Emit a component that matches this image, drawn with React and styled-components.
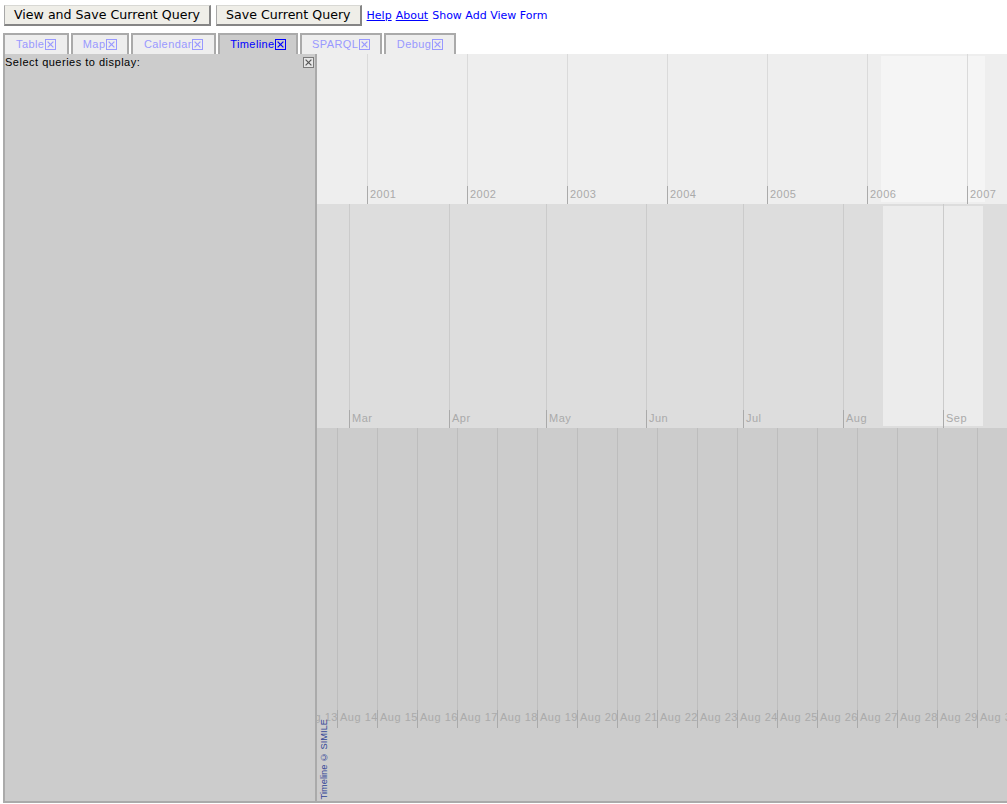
import React from 'react';
import styled, { createGlobalStyle } from 'styled-components';

const GlobalStyle = createGlobalStyle`
  html, body { margin: 0; padding: 0; background: #fff; }
  body {
    font-family: "Liberation Sans", Arial, sans-serif;
    width: 1007px;
    overflow: hidden;
  }
  #root { width: 1007px; }
`;

const Page = styled.div`
  padding: 4px 0 0 3px;
`;

const Toolbar = styled.div`
  display: flex;
  align-items: center;
  height: 22px;
  margin-left: 1px;
`;

const Button = styled.button`
  box-sizing: border-box;
  height: 21px;
  margin: 0 5px 0 0;
  padding: 0 9px 0 9px;
  font-family: "DejaVu Sans", sans-serif;
  font-size: 12.6px;
  color: #000;
  background: #efeee8;
  border-style: solid;
  border-width: 1px 2px 2px 1px;
  border-color: #d8d8d4 #858585 #858585 #a8a8a8;
  white-space: nowrap;
  cursor: pointer;
`;

const NavLink = styled.a`
  font-family: "DejaVu Sans", sans-serif;
  font-size: 11px;
  color: #0000ff;
  text-decoration: ${(p) => (p.$plain ? 'none' : 'underline')};
  margin-right: 4px;
  cursor: pointer;
  white-space: nowrap;
`;

const TabRow = styled.div`
  display: flex;
  align-items: flex-end;
  gap: 1px;
  margin-top: 7px;
  height: 21px;
`;

const Tab = styled.div`
  box-sizing: border-box;
  height: 21px;
  display: flex;
  align-items: center;
  padding: 0 ${(p) => p.$pad ?? 11}px;
  margin-right: ${(p) => p.$mr || 0}px;
  border: 2px solid #aaa;
  border-bottom: none;
  background: ${(p) => (p.$active ? '#ccc' : '#eee')};
  color: ${(p) => (p.$active ? '#0000ff' : '#9999ff')};
  font-family: "Liberation Sans", Arial, sans-serif;
  font-size: 11px;
  letter-spacing: 0.4px;
  line-height: 13px;
  white-space: nowrap;
  cursor: pointer;
`;

const IconSvg = styled.svg`
  flex: none;
  display: block;
  margin-left: ${(p) => (p.$panel ? 0 : 0.5)}px;
  margin-top: ${(p) => (p.$panel ? 1 : 0)}px;
  rect {
    fill: ${(p) => (p.$panel ? '#e6e6e6' : 'none')};
    stroke: ${(p) => (p.$panel ? '#7a7a7a' : 'currentColor')};
    stroke-width: 1;
  }
  path {
    stroke: ${(p) => (p.$panel ? '#555' : 'currentColor')};
    stroke-width: 1.2;
    fill: none;
  }
`;

const CloseIcon = ({ panel }) => (
  <IconSvg $panel={panel} width="11" height="11" viewBox="0 0 11 11">
    <rect x="0.5" y="0.5" width="10" height="10" />
    <path d="M2.6 2.6 L8.4 8.4 M8.4 2.6 L2.6 8.4" />
  </IconSvg>
);

const Main = styled.div`
  display: flex;
  height: 749px;
`;

const Sidebar = styled.div`
  box-sizing: border-box;
  width: 314px;
  flex: none;
  background: #ccc;
  border: 2px solid #aaa;
  border-top: none;
`;

const SidebarHeader = styled.div`
  display: flex;
  justify-content: space-between;
  align-items: flex-start;
  padding: 2px 1px 0 0;
  font-family: "Liberation Sans", Arial, sans-serif;
  font-size: 11px;
  letter-spacing: 0.5px;
  line-height: 13px;
  color: #000;
`;

const Timeline = styled.div`
  position: relative;
  flex: 1;
  min-width: 0;
  background: #ccc;
  border-bottom: 2px solid #aaa;
  overflow: hidden;
`;

const Band = styled.div`
  position: relative;
  height: ${(p) => p.$h}px;
  background: ${(p) => p.$bg};
  overflow: hidden;
`;

const Highlight = styled.div`
  position: absolute;
  top: 2px;
  bottom: 2px;
  background: ${(p) => p.$color};
`;

const Marker = styled.div`
  position: absolute;
  top: 0;
  bottom: 0;
  width: 0;
`;

const GridLine = styled.div`
  position: absolute;
  left: 0;
  top: 0;
  bottom: 18px;
  width: 1px;
  background: ${(p) => p.$color};
`;

const Tick = styled.div`
  position: absolute;
  left: 0;
  bottom: 0;
  height: 18px;
  width: 1px;
  background: #aaa;
  z-index: 1;
`;

const Label = styled.div`
  position: absolute;
  left: 3px;
  bottom: ${(p) => p.$bottom ?? 3}px;
  font-family: "Liberation Sans", Arial, sans-serif;
  font-size: 11px;
  letter-spacing: 0.5px;
  line-height: 13px;
  color: #aaa;
  white-space: nowrap;
`;

const Copyright = styled.div`
  position: absolute;
  left: 2px;
  bottom: 2px;
  writing-mode: vertical-rl;
  transform: rotate(180deg);
  font-family: "Liberation Sans", Arial, sans-serif;
  font-size: 9.3px;
  line-height: 11px;
  color: #2f4396;
  white-space: nowrap;
`;

const years = Array.from({ length: 8 }, (_, i) => ({ label: String(2000 + i), x: -50 + 100 * i }));

const monthDays = [
  ['Feb', 28], ['Mar', 31], ['Apr', 30], ['May', 31], ['Jun', 30],
  ['Jul', 31], ['Aug', 31], ['Sep', 30], ['Oct', 31],
];
const pxPerDay = 100 / 31;
const months = (() => {
  const out = [];
  let x = 32.3 - 28 * pxPerDay;
  monthDays.forEach(([m, d]) => {
    out.push({ label: m, x: Math.round(x) });
    x += d * pxPerDay;
  });
  return out;
})();

const days = Array.from({ length: 19 }, (_, i) => ({ label: `Aug ${13 + i}`, x: -20 + 40 * i }));

const BandView = ({ h, bg, line, items, highlight, labelBottom }) => (
  <Band $h={h} $bg={bg}>
    {highlight && (
      <Highlight $color={highlight.color} style={{ left: highlight.x, width: highlight.w }} />
    )}
    {items.map((it) => (
      <Marker key={it.label} style={{ left: it.x }}>
        <Label $bottom={labelBottom}>{it.label}</Label>
        <GridLine $color={line} />
        <Tick />
      </Marker>
    ))}
  </Band>
);

const tabs = [
  { name: 'Table', mr: 1 },
  { name: 'Map', pad: 10, mr: 1 },
  { name: 'Calendar', pad: 11, mr: 1 },
  { name: 'Timeline', active: true, pad: 10, mr: 1 },
  { name: 'SPARQL', pad: 10, mr: 1 },
  { name: 'Debug', pad: 11 },
];

export default function App() {
  return (
    <>
      <GlobalStyle />
      <Page>
        <Toolbar>
          <Button>View and Save Current Query</Button>
          <Button>Save Current Query</Button>
          <NavLink href="#help">Help</NavLink>
          <NavLink href="#about">About</NavLink>
          <NavLink as="span" $plain>Show Add View Form</NavLink>
        </Toolbar>
        <TabRow>
          {tabs.map((t) => (
            <Tab key={t.name} $active={t.active} $mr={t.mr} $pad={t.pad}>
              {t.name}
              <CloseIcon />
            </Tab>
          ))}
        </TabRow>
        <Main>
          <Sidebar>
            <SidebarHeader>
              <span>Select queries to display:</span>
              <CloseIcon panel />
            </SidebarHeader>
          </Sidebar>
          <Timeline>
            <BandView
              h={150}
              bg="#eee"
              line="#dadada"
              items={years}
              highlight={{ x: 564, w: 104, color: '#f5f5f5' }}
            />
            <BandView
              h={224}
              bg="#ddd"
              line="#cbcbcb"
              items={months}
              highlight={{ x: 566, w: 100, color: '#ececec' }}
            />
            <BandView h={300} bg="#ccc" line="#bdbdbd" items={days} labelBottom={4} />
            <Copyright>Timeline © SIMILE</Copyright>
          </Timeline>
        </Main>
      </Page>
    </>
  );
}
